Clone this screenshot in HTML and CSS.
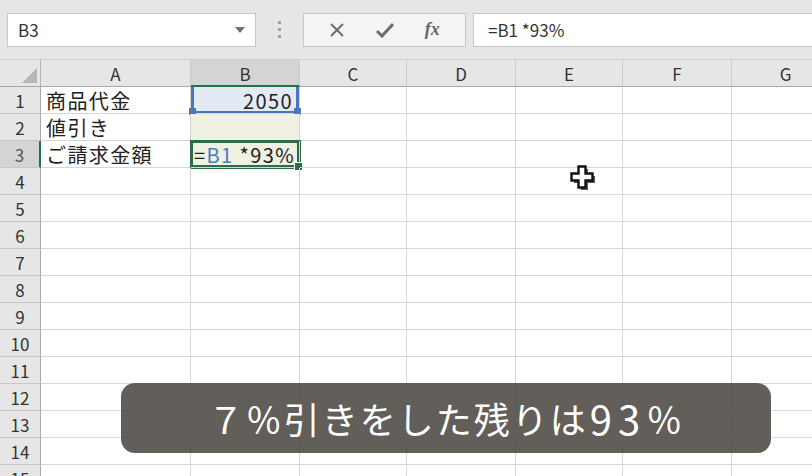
FILE: index.html
```html
<!DOCTYPE html>
<html lang="ja">
<head>
    <meta charset="UTF-8">
    <title>ご請求金額</title>
    <link rel="stylesheet" href="styles.css">
</head>
<body>

    <!-- 名前ボックスと数式バー -->
    <div class="toolbar">
        <div class="namebox">
            <span>B3</span>
            <svg class="drop" width="10" height="6" viewBox="0 0 10 6"><path d="M0 0H10L5 6Z" fill="#707070"/></svg>
        </div>
        <div class="grip"><i></i><i></i><i></i></div>
        <div class="fxbuttons">
            <svg width="16" height="16" viewBox="0 0 16 16"><path d="M2 2L14 14M14 2L2 14" stroke="#6d6d6d" stroke-width="2"/></svg>
            <svg width="18" height="16" viewBox="0 0 18 16"><path d="M1 9L6 14L17 2" stroke="#6d6d6d" stroke-width="3" fill="none"/></svg>
            <span class="fx">fx</span>
        </div>
        <div class="formula">=B1 *93%</div>
    </div>

    <!-- シート -->
    <div class="sheet">
        <div class="corner"></div>
        <div class="colhead">A</div>
        <div class="colhead selected">B</div>
        <div class="colhead">C</div>
        <div class="colhead">D</div>
        <div class="colhead">E</div>
        <div class="colhead">F</div>
        <div class="colhead">G</div>

        <div class="rowhead">1</div>
        <div class="cell">商品代金</div>
        <div class="cell num ref">2050</div>
        <div class="cell"></div><div class="cell"></div><div class="cell"></div><div class="cell"></div><div class="cell"></div>

        <div class="rowhead">2</div>
        <div class="cell">値引き</div>
        <div class="cell tint"></div>
        <div class="cell"></div><div class="cell"></div><div class="cell"></div><div class="cell"></div><div class="cell"></div>

        <div class="rowhead selected">3</div>
        <div class="cell">ご請求金額</div>
        <div class="cell tint active">=<span class="refname">B1</span> *93%</div>
        <div class="cell"></div><div class="cell"></div><div class="cell"></div><div class="cell"></div><div class="cell"></div>

        <div class="rowhead">4</div>
        <div class="cell"></div><div class="cell"></div><div class="cell"></div><div class="cell"></div><div class="cell"></div><div class="cell"></div><div class="cell"></div>
        <div class="rowhead">5</div>
        <div class="cell"></div><div class="cell"></div><div class="cell"></div><div class="cell"></div><div class="cell"></div><div class="cell"></div><div class="cell"></div>
        <div class="rowhead">6</div>
        <div class="cell"></div><div class="cell"></div><div class="cell"></div><div class="cell"></div><div class="cell"></div><div class="cell"></div><div class="cell"></div>
        <div class="rowhead">7</div>
        <div class="cell"></div><div class="cell"></div><div class="cell"></div><div class="cell"></div><div class="cell"></div><div class="cell"></div><div class="cell"></div>
        <div class="rowhead">8</div>
        <div class="cell"></div><div class="cell"></div><div class="cell"></div><div class="cell"></div><div class="cell"></div><div class="cell"></div><div class="cell"></div>
        <div class="rowhead">9</div>
        <div class="cell"></div><div class="cell"></div><div class="cell"></div><div class="cell"></div><div class="cell"></div><div class="cell"></div><div class="cell"></div>
        <div class="rowhead">10</div>
        <div class="cell"></div><div class="cell"></div><div class="cell"></div><div class="cell"></div><div class="cell"></div><div class="cell"></div><div class="cell"></div>
        <div class="rowhead">11</div>
        <div class="cell"></div><div class="cell"></div><div class="cell"></div><div class="cell"></div><div class="cell"></div><div class="cell"></div><div class="cell"></div>
        <div class="rowhead">12</div>
        <div class="cell"></div><div class="cell"></div><div class="cell"></div><div class="cell"></div><div class="cell"></div><div class="cell"></div><div class="cell"></div>
        <div class="rowhead">13</div>
        <div class="cell"></div><div class="cell"></div><div class="cell"></div><div class="cell"></div><div class="cell"></div><div class="cell"></div><div class="cell"></div>
        <div class="rowhead">14</div>
        <div class="cell"></div><div class="cell"></div><div class="cell"></div><div class="cell"></div><div class="cell"></div><div class="cell"></div><div class="cell"></div>
        <div class="rowhead">15</div>
        <div class="cell"></div><div class="cell"></div><div class="cell"></div><div class="cell"></div><div class="cell"></div><div class="cell"></div><div class="cell"></div>
    </div>

    <!-- マウスカーソル -->
    <svg class="cursor" width="26" height="28" viewBox="0 0 26 28">
        <path d="M9 2H16V9H23V16H16V23H9V16H2V9H9Z" fill="#555" transform="translate(2 2)"/>
        <path d="M8.5 1.5H15.5V8.5H22.5V15.5H15.5V22.5H8.5V15.5H1.5V8.5H8.5Z" fill="#fff" stroke="#111" stroke-width="2.4"/>
    </svg>

    <!-- 字幕 -->
    <div class="caption">７％引きをした残りは<span class="digits">93</span>％</div>

</body>
</html>
```

FILE: styles.css
```css
* { box-sizing: border-box; }

body
{
    margin: 0; width: 812px; height: 476px; overflow: hidden;
    position: relative; background: #ffffff;
    font-family: "Noto Sans CJK JP", "Liberation Sans", sans-serif; color: #222222;
}

.toolbar
{
    display: flex; align-items: center; height: 60px;
    padding-left: 7px; background: #e6e6e6;
    border-bottom: 1px solid #d0d0d0;
}

.namebox
{
    display: flex; align-items: center; justify-content: space-between;
    width: 249px; height: 34px; padding: 0 10px 0 10px;
    background: #ffffff; border: 1px solid #c6c6c6;
    font-size: 17px; color: #333333;
}

.grip
{
    display: flex; flex-direction: column; align-items: center; gap: 4px;
    width: 47px;
}

.grip i { width: 3px; height: 3px; background: #a0a0a0; }

.fxbuttons
{
    display: flex; align-items: center; justify-content: space-around;
    width: 163px; height: 34px; padding: 0 10px;
    background: #f4f4f4; border: 1px solid #c6c6c6;
}

.fx
{
    font-family: "Liberation Serif", serif; font-style: italic; font-weight: bold;
    font-size: 18px; color: #666666;
}

.formula
{
    flex: 1; height: 34px; margin-left: 7px; margin-right: -4px;
    padding-left: 14px; line-height: 32px;
    background: #ffffff; border: 1px solid #c6c6c6;
    font-size: 17px; color: #333333;
}

.sheet
{
    display: grid;
    grid-template-columns: 41px 150px 109px 107px 109px 107px 109px 108px;
    grid-template-rows: 27px repeat(15, 27px);
}

.corner
{
    position: relative; background: #e6e6e6;
    border-right: 1px solid #b4b4b4; border-bottom: 1px solid #a8a8a8;
}

.corner::after
{
    content: ""; position: absolute; right: 3px; bottom: 3px;
    border-left: 15px solid transparent; border-bottom: 15px solid #b6b6b6;
}

.colhead
{
    background: #e6e6e6; text-align: center; font-size: 17px; line-height: 27px;
    border-right: 1px solid #cacaca; border-bottom: 1px solid #a8a8a8; color: #333333;
}

.colhead.selected { background: #d4d4d4; border-bottom: 2px solid #217346; }

.rowhead
{
    background: #e6e6e6; text-align: center; font-size: 17px; line-height: 27px;
    border-right: 1px solid #a8a8a8; border-bottom: 1px solid #c8c8c8; color: #333333;
}

.rowhead.selected { background: #d4d4d4; border-right: 2px solid #217346; color: #555555; }

.cell
{
    position: relative; padding: 1px 0 0 5px;
    font-size: 20px; letter-spacing: 1.4px; line-height: 26px; white-space: nowrap;
    border-right: 1px solid #d6d6d6; border-bottom: 1px solid #d6d6d6;
}

.num { text-align: right; padding-right: 6px; }

.tint { background: #eef0e2; }

/* 参照されているセル */
.ref
{
    background: #e4eaf5;
    box-shadow: inset 3px 0 0 #4a76bb, inset -3px 0 0 #4a76bb, inset 0 -2px 0 #4a76bb;
}

.ref::before, .ref::after
{
    content: ""; position: absolute; bottom: -2px;
    width: 7px; height: 7px; background: #4a76bb;
}

.ref::before { left: -2px; }
.ref::after { right: -2px; }

/* アクティブセル */
.active
{
    padding-left: 3px;
    box-shadow: inset 0 0 0 2px #2e6b46, 0 0 0 1px #2e6b46;
}

.active::after
{
    content: ""; position: absolute; right: -4px; bottom: -4px;
    width: 7px; height: 7px; background: #2e6b46; border: 1px solid #ffffff;
}

.refname { color: #4a7cc4; }

.cursor { position: absolute; left: 570px; top: 165px; }

.caption
{
    position: absolute; left: 121px; top: 383px; width: 650px; height: 70px;
    border-radius: 14px; background: rgba(88, 84, 80, 0.94);
    display: flex; align-items: center; justify-content: center;
    font-size: 36px; letter-spacing: 2px; color: #ffffff;
}

.digits { font-size: 40px; letter-spacing: 6px; padding-left: 2px; }
```
